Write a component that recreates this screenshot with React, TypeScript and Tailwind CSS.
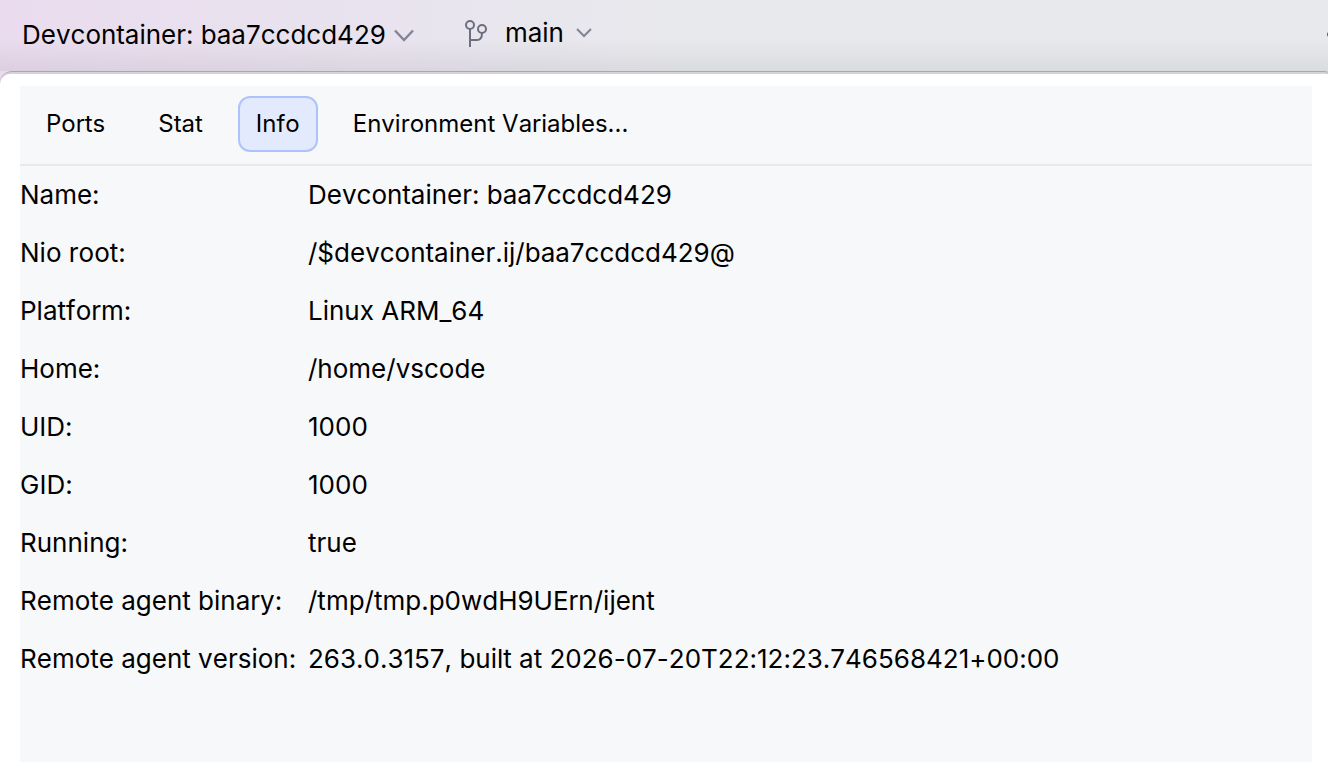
import { useState } from "react";

const details: [string, string][] = [
  ["Name:", "Devcontainer: baa7ccdcd429"],
  ["Nio root:", "/$devcontainer.ij/baa7ccdcd429@"],
  ["Platform:", "Linux ARM_64"],
  ["Home:", "/home/vscode"],
  ["UID:", "1000"],
  ["GID:", "1000"],
  ["Running:", "true"],
  ["Remote agent binary:", "/tmp/tmp.p0wdH9UErn/ijent"],
  ["Remote agent version:", "263.0.3157, built at 2026-07-20T22:12:23.746568421+00:00"],
];

const tabs = ["Ports", "Stat", "Info", "Environment Variables..."];

function BranchIcon() {
  return (
    <svg width="24" height="28" viewBox="0 0 24 28" fill="none" stroke="#6c707e" strokeWidth="2" aria-hidden="true">
      <circle cx="6" cy="6" r="4" />
      <circle cx="18" cy="10" r="4" />
      <path d="M6 10V28" />
      <path d="M6 21H13Q18 21 18 14" />
    </svg>
  );
}

export default function App() {
  const [active, setActive] = useState("Info");

  return (
    <div className="flex min-h-screen flex-col overflow-x-hidden bg-linear-to-r from-[#eadcee] via-[#e8e5ee] via-35% to-[#e8e9ed] to-50% font-['Inter',sans-serif] text-black [font-feature-settings:'calt'_0] [font-kerning:none] [font-variant-ligatures:none]">
      <header className="relative flex h-[71px] shrink-0 items-start overflow-hidden bg-linear-to-b from-transparent from-55% to-black/6 px-[22px]">
        <button type="button" className="flex h-[70px] items-center gap-2 text-[26px] leading-8">
          Devcontainer: baa7ccdcd429
          <svg width="20" height="14" viewBox="0 0 20 14" fill="none" stroke="#818594" strokeWidth="2.4" aria-hidden="true">
            <path d="M1 2.5L10 12L19 2.5" />
          </svg>
        </button>
        <button type="button" className="ml-[50px] flex h-[66px] items-center text-[26px] leading-8">
          <BranchIcon />
          <span className="ml-[17px]">main</span>
          <svg className="ml-3" width="16" height="10" viewBox="0 0 16 10" fill="none" stroke="#818594" strokeWidth="2" aria-hidden="true">
            <path d="M1 1L8 8L15 1" />
          </svg>
        </button>
        <span className="absolute top-8 -right-1 size-[5px] rounded-full bg-[#5a5d68]" />
      </header>

      <main className="-mr-2 flex grow flex-col rounded-t-xl border-t border-[#a9a8af] bg-[#d4d4d8] pt-[2px]">
        <div className="flex grow flex-col rounded-t-[10px] bg-white pt-3 pr-6 pb-2 pl-5">
          <section className="flex grow flex-col bg-[#f7f8fa]">
            <div role="tablist" className="flex gap-[17px] border-b-2 border-[#e8e9ed] px-2 pt-[10px] pb-3">
              {tabs.map((tab) => (
                <button
                  key={tab}
                  type="button"
                  role="tab"
                  aria-selected={tab === active}
                  onClick={() => setActive(tab)}
                  className={
                    "h-14 rounded-xl border-2 px-4 text-2xl " +
                    (tab === active ? "border-[#adc3fb] bg-[#e4eafd]" : "border-transparent")
                  }
                >
                  {tab}
                </button>
              ))}
            </div>
            <dl className="grid grid-cols-[288px_1fr] text-[26px] leading-[58px]">
              {details.map(([label, value]) => (
                <div key={label} className="contents">
                  <dt className="whitespace-nowrap">{label}</dt>
                  <dd>{value}</dd>
                </div>
              ))}
            </dl>
          </section>
        </div>
      </main>
    </div>
  );
}
